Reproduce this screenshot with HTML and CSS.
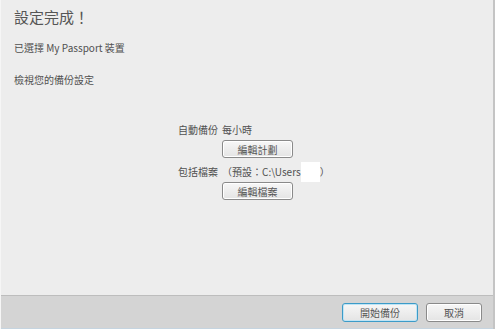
FILE: index.html
```html
<!DOCTYPE html>
<html lang="zh-Hant">
<head>
    <meta charset="UTF-8">
    <title>設定完成</title>
    <link rel="stylesheet" href="styles.css">
</head>
<body>
    <div class="window">
        <div class="content">
            <h1 class="title">設定完成！</h1>
            <p class="line">已選擇 My Passport 裝置</p>
            <p class="line review">檢視您的備份設定</p>
            <div class="settings">
                <span class="label">自動備份</span>
                <div class="value">
                    <span>每小時</span>
                    <button class="btn">編輯計劃</button>
                </div>
                <span class="label">包括檔案</span>
                <div class="value">
                    <span>（預設：C:\Users<span class="masked"><span class="mask"></span></span>）</span>
                    <button class="btn">編輯檔案</button>
                </div>
            </div>
        </div>
        <div class="footer">
            <button class="btn btn-wide primary">開始備份</button>
            <button class="btn btn-small">取消</button>
        </div>
    </div>
</body>
</html>
```

FILE: styles.css
```css
body {
  margin: 0;
  font-family: "Noto Sans CJK TC", "Noto Sans", sans-serif;
  color: #505050;
  background: #ededed;
}
.window {
  width: 495px;
  height: 329px;
  display: flex;
  flex-direction: column;
  border-left: 1px solid #f6f6f6;
  border-right: 2px solid #c4c4c4;
  box-sizing: border-box;
}
.content { flex: 1; padding: 6px 0 0 13px; }
.title { margin: 0; font-size: 15px; font-weight: normal; color: #555; }
.line { margin: 14px 0 0; font-size: 10px; line-height: 14px; }
.review { margin-top: 18px; }
.settings {
  display: grid;
  grid-template-columns: auto auto;
  column-gap: 4px;
  row-gap: 7px;
  margin: 36px 0 0 164px;
  font-size: 10px;
  justify-content: start;
}
.label { line-height: 14px; }
.value { display: flex; flex-direction: column; align-items: flex-start; gap: 3px; line-height: 14px; }
.masked { position: relative; display: inline-block; width: 19px; height: 14px; vertical-align: top; }
.mask { position: absolute; left: 0; top: -3px; width: 19px; height: 20px; background: #fff; }
.btn {
  font-family: inherit;
  font-size: 10px;
  color: #555;
  width: 71px;
  height: 18px;
  padding: 0;
  border: 1px solid #8a8a8a;
  border-radius: 3px;
  background: linear-gradient(#f7f7f7, #e4e4e4);
  box-shadow: inset 0 0 0 1px #fff;
}
.footer {
  height: 32px;
  background: #d4d4d4;
  border-top: 1px solid #bdbdbd;
  border-bottom: 1px solid #c5d4e0;
  display: flex;
  justify-content: flex-end;
  align-items: center;
  gap: 8px;
  padding-right: 11px;
}
.btn-wide { width: 76px; height: 19px; }
.btn-small { width: 56px; height: 19px; }
.primary { border-color: #3c9bc8; box-shadow: inset 0 0 0 1px #bfe4f5; }
```
